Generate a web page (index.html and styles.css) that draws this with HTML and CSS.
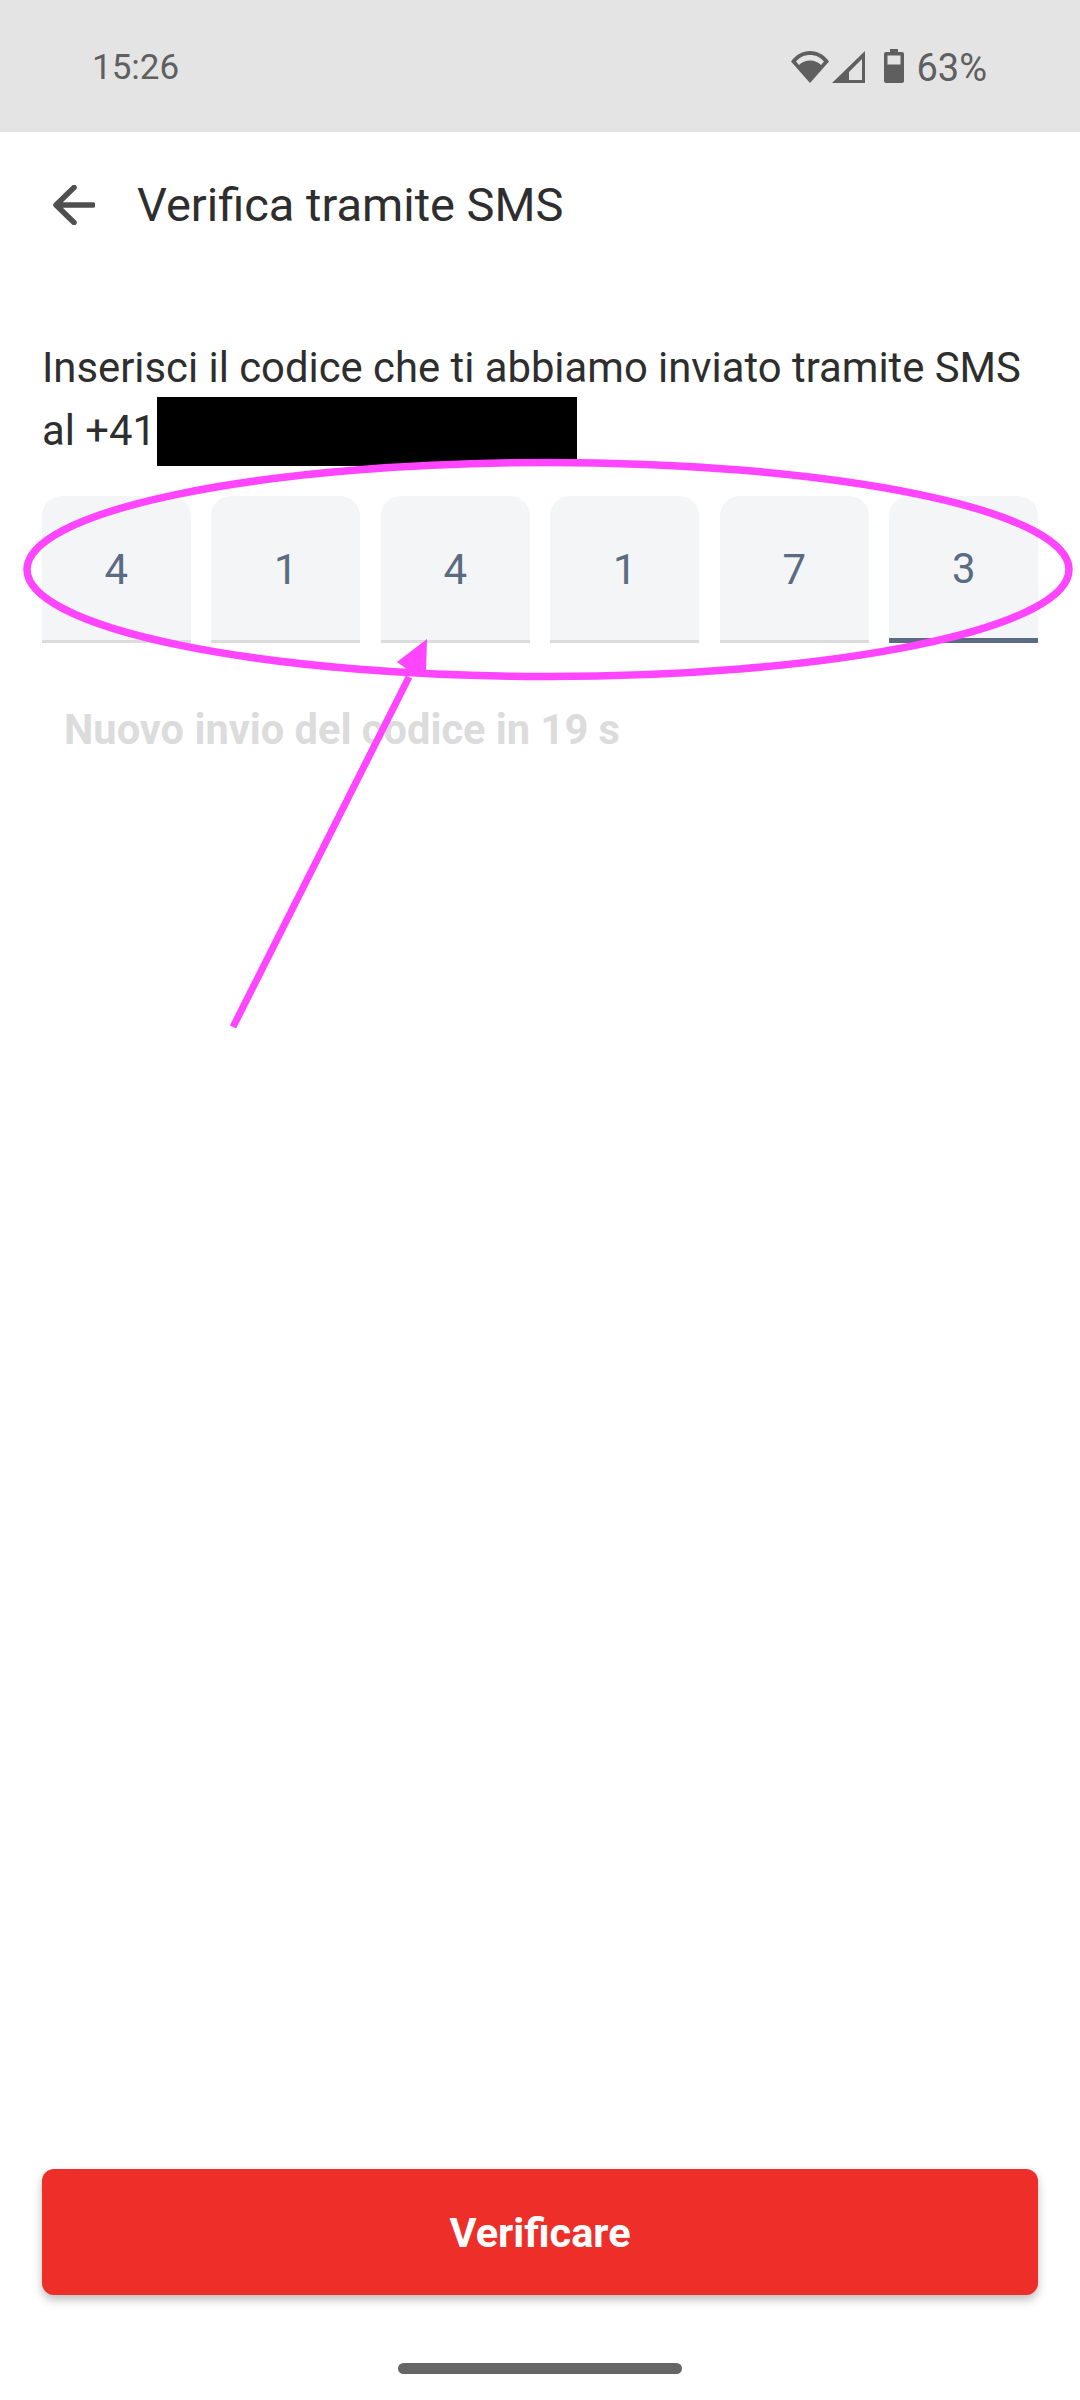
FILE: index.html
```html
<!DOCTYPE html>
<html lang="it">
<head>
<meta charset="utf-8">
<title>Verifica tramite SMS</title>
<link rel="stylesheet" href="styles.css">
</head>
<body>
<div class="screen">
  <div class="statusbar">
    <span class="time">15:26</span>
    <div class="status-icons">
      <svg class="ic-wifi" viewBox="0 0 38 33"><path d="M0 11.500C5 4.500 11.500 1 19 1s14 3.500 19 10.500L19 33z" fill="#5f5f5f"/><path d="M5 11.500C9 7 13.500 5 19 5s10 2 14 6.500l-3 3.500C27 12 23.500 10.500 19 10.500S11 12 8 15z" fill="#e4e4e4"/></svg>
      <svg class="ic-signal" viewBox="0 0 33 32"><path d="M33 0v32H0z" fill="#5f5f5f"/><path d="M30 8v21H17V21z" fill="#e4e4e4"/></svg>
      <svg class="ic-battery" viewBox="0 0 20 34"><path d="M6 0h8v3h4a2 2 0 0 1 2 2v27a2 2 0 0 1-2 2H2a2 2 0 0 1-2-2V5a2 2 0 0 1 2-2h4z" fill="#5f5f5f"/><rect x="3.500" y="6.500" width="13" height="9" fill="#e4e4e4"/></svg>
      <span class="pct">63%</span>
    </div>
  </div>

  <header class="appbar">
    <svg class="ic-back" viewBox="0 0 42 40"><path d="M40 20H4M21 2.500 3 20l18 17.500" fill="none" stroke="#4f4f4f" stroke-width="5.500" stroke-linecap="round" stroke-linejoin="round"/></svg>
    <h1 class="title">Verifica tramite SMS</h1>
  </header>

  <main class="content">
    <p class="intro">Inserisci il codice che ti abbiamo inviato tramite SMS<br>al +41</p>
    <div class="code">
      <div class="cell">4</div>
      <div class="cell">1</div>
      <div class="cell">4</div>
      <div class="cell">1</div>
      <div class="cell">7</div>
      <div class="cell active">3</div>
    </div>
    <p class="resend">Nuovo invio del codice in 19 s</p>
  </main>

  <div class="footer">
    <button class="verify" type="button">Verificare</button>
    <div class="home-pill"></div>
  </div>

  <div class="redaction"></div>
  <svg class="annotation" viewBox="0 0 1080 2400">
    <ellipse cx="548" cy="569.500" rx="521" ry="107" fill="none" stroke="#ff45ff" stroke-width="7.500"/>
    <path d="M233 1027 409 677" fill="none" stroke="#ff45ff" stroke-width="7"/>
    <path d="M427 639 397 662 408 670 426 672z" fill="#ff45ff"/>
  </svg>
</div>
</body>
</html>
```

FILE: styles.css
```css
* { box-sizing: border-box; }
html, body { margin: 0; padding: 0; background: #fff; }
body { font-family: Roboto, "Noto Sans", sans-serif; }

.screen {
  position: relative;
  width: 1080px;
  height: 2400px;
  display: flex;
  flex-direction: column;
  overflow: hidden;
}

.statusbar {
  height: 132px;
  flex: none;
  background: #e4e4e4;
  display: flex;
  justify-content: space-between;
  align-items: flex-start;
  padding: 47px 93px 0 92px;
  color: #5f5f5f;
  font-size: 35px;
  line-height: 42px;
}
.status-icons { display: flex; align-items: flex-start; margin-top: 3px; }
.ic-wifi { width: 38px; height: 33px; }
.ic-signal { width: 33px; height: 32px; margin-left: 3px; margin-top: 1px; }
.ic-battery { width: 20px; height: 34px; margin-left: 19px; margin-top: -1px; }
.pct { margin-left: 12px; font-size: 38px; line-height: 42px; margin-top: -3px; }

.appbar {
  flex: none;
  height: 146px;
  display: flex;
  align-items: center;
  padding-left: 53px;
}
.ic-back { width: 42px; height: 40px; flex: none; }
.title {
  margin: 0 0 0 42px;
  font-size: 47px;
  font-weight: 400;
  color: #2e2e2e;
  line-height: 56px;
}

.content { flex: 1; padding: 58px 42px 0; }
.intro {
  margin: 0;
  font-size: 41.8px;
  line-height: 63px;
  color: #2e2e2e;
}
.code {
  margin-top: 34px;
  display: flex;
  gap: 20.8px;
}
.cell {
  flex: 1;
  height: 147px;
  background: #f4f5f7;
  border-bottom: 3px solid #dcdcdc;
  border-radius: 20px 20px 0 0;
  color: #5a6b82;
  font-size: 42px;
  display: flex;
  align-items: center;
  justify-content: center;
  padding-top: 3px;
}
.cell.active { border-bottom: 5px solid #5a6b82; }
.resend {
  margin: 62px 0 0 22px;
  font-size: 41.6px;
  font-weight: 700;
  line-height: 50px;
  color: #dcdcdc;
}

.footer {
  flex: none;
  height: 231px;
  padding: 0 42px;
  display: flex;
  flex-direction: column;
  align-items: center;
}
.verify {
  width: 100%;
  height: 126px;
  flex: none;
  border: 0;
  border-radius: 12px;
  background: #ee2e28;
  color: #fff;
  font-family: inherit;
  font-size: 41.5px;
  font-weight: 700;
  box-shadow: 0 5px 10px rgba(0, 0, 0, 0.25);
}
.home-pill {
  width: 284px;
  height: 11px;
  margin-top: 68px;
  border-radius: 6px;
  background: #666;
}

.redaction {
  position: absolute;
  left: 157px;
  top: 397px;
  width: 420px;
  height: 69px;
  background: #000;
}
.annotation {
  position: absolute;
  left: 0;
  top: 0;
  width: 1080px;
  height: 2400px;
  pointer-events: none;
}
```
